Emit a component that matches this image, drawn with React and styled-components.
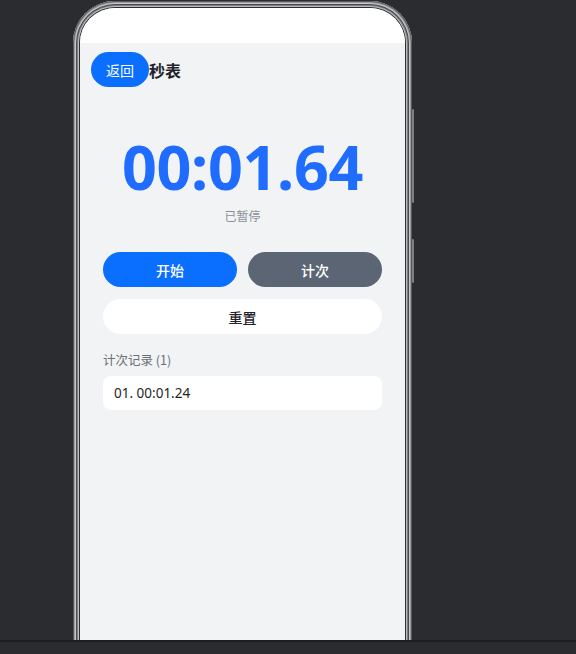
import React from 'react'
import styled, { createGlobalStyle } from 'styled-components'

const colors = {
  desk: '#2b2c30',
  deskEdge: '#1d1e21',
  screen: '#f1f3f5',
  white: '#ffffff',
  blue: '#0a6fff',
  timer: '#1f6cff',
  slate: '#5b6573',
  text: '#1f2329',
  muted: '#8a8f96',
  label: '#6b6f76',
}

const GlobalStyle = createGlobalStyle`
  html, body {
    margin: 0;
    padding: 0;
    background: ${colors.desk};
    font-family: 'Noto Sans CJK SC', 'Noto Sans', sans-serif;
  }
  * { box-sizing: border-box; }
`

const App = () => {
  const laps = ['00:01.24']
  return (
    <>
      <GlobalStyle />
      <Desk>
        <Stage>
          <Phone>
            <SideKey $top={108} $height={94} />
            <SideKey $top={238} $height={44} />
            <Screen>
              <StatusBar />
              <Page>
                <Header>
                  <BackBtn>返回</BackBtn>
                  <Title>秒表</Title>
                </Header>

                <Clock>
                  <Time>00:01.64</Time>
                  <State>已暂停</State>
                </Clock>

                <Controls>
                  <BtnRow>
                    <Btn $variant="primary">开始</Btn>
                    <Btn $variant="slate">计次</Btn>
                  </BtnRow>
                  <Btn $variant="plain">重置</Btn>
                </Controls>

                <LapLabel>计次记录 ({laps.length})</LapLabel>
                {laps.map((t, i) => (
                  <LapCard key={i}>
                    {String(i + 1).padStart(2, '0')}. {t}
                  </LapCard>
                ))}
              </Page>
            </Screen>
          </Phone>
        </Stage>
        <BottomBar />
      </Desk>
    </>
  )
}

const Desk = styled.div`
  width: 576px;
  height: 654px;
  display: flex;
  flex-direction: column;
  overflow: hidden;
`

const Stage = styled.div`
  height: 640px;
  padding: 1px 0 0 73px;
  overflow: hidden;
`

const Phone = styled.div`
  position: relative;
  width: 339px;
  height: 720px;
  padding: 7px;
  border-radius: 42px;
  background: #2e2f32;
  box-shadow: inset 0 0 0 1px #58595c, inset 0 0 0 2px #9a9b9e, inset 0 0 0 3px #c9c9cb,
    inset 0 0 0 4px #4a4b4e, inset 0 0 0 5px #7e7f82, inset 0 0 0 6px #bdbdbf;
`

const SideKey = styled.div`
  position: absolute;
  right: -2px;
  top: ${p => p.$top}px;
  width: 2px;
  height: ${p => p.$height}px;
  background: #7d7e81;
  border-radius: 1px;
`

const Screen = styled.div`
  width: 100%;
  height: 100%;
  border-radius: 35px;
  overflow: hidden;
  background: ${colors.screen};
  display: flex;
  flex-direction: column;
`

const StatusBar = styled.div`
  height: 35px;
  background: ${colors.white};
  flex-shrink: 0;
`

const Page = styled.div`
  padding: 9px 23px 0;
  display: flex;
  flex-direction: column;
`

const Header = styled.div`
  display: flex;
  align-items: center;
  margin-left: -12px;
  height: 35px;
`

const BackBtn = styled.div`
  width: 58px;
  height: 35px;
  border-radius: 18px;
  background: ${colors.blue};
  color: ${colors.white};
  font-size: 14px;
  display: flex;
  align-items: center;
  justify-content: center;
`

const Title = styled.div`
  font-size: 16px;
  font-weight: 700;
  color: ${colors.text};
`

const Clock = styled.div`
  display: flex;
  flex-direction: column;
  align-items: center;
  margin-top: 46px;
`

const Time = styled.div`
  font-family: 'Noto Sans', sans-serif;
  font-weight: 700;
  font-size: 61px;
  line-height: 68px;
  color: ${colors.timer};
  letter-spacing: -0.3px;
`

const State = styled.div`
  margin-top: 6px;
  font-size: 12px;
  line-height: 18px;
  color: ${colors.muted};
`

const Controls = styled.div`
  display: grid;
  gap: 12px;
  margin-top: 27px;
`

const BtnRow = styled.div`
  display: grid;
  grid-template-columns: 1fr 1fr;
  gap: 11px;
`

const variants = {
  primary: `background: ${colors.blue}; color: ${colors.white};`,
  slate: `background: ${colors.slate}; color: ${colors.white};`,
  plain: `background: ${colors.white}; color: ${colors.text};`,
}

const Btn = styled.div`
  height: 35px;
  border-radius: 18px;
  display: flex;
  align-items: center;
  justify-content: center;
  font-size: 14px;
  font-weight: 500;
  ${p => variants[p.$variant]}
`

const LapLabel = styled.div`
  margin-top: 17px;
  font-size: 12.5px;
  line-height: 18px;
  color: ${colors.label};
`

const LapCard = styled.div`
  margin-top: 7px;
  height: 34px;
  border-radius: 8px;
  background: ${colors.white};
  padding: 0 11px;
  display: flex;
  align-items: center;
  font-family: 'Noto Sans', sans-serif;
  font-size: 13.5px;
  color: ${colors.text};
`

const BottomBar = styled.div`
  flex: 1;
  background: ${colors.desk};
  border-top: 2px solid ${colors.deskEdge};
`

export default App
